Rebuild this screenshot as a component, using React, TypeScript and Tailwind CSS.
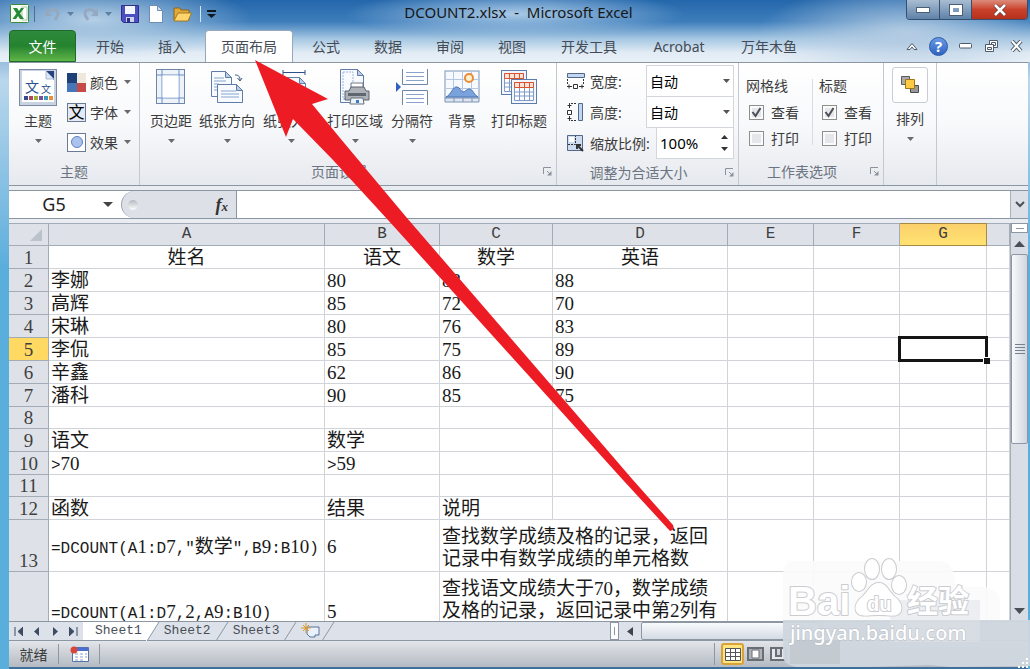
import { useState } from "react";
import type { ReactNode } from "react";

type Cell = { text: string; span?: number; lines?: string[] };
type Row = { id: number; cells: Cell[]; center?: boolean; height?: string };

const columns = ["A", "B", "C", "D", "E", "F", "G", ""];
const tabs = [
  { name: "开始", width: "w-[62px]" },
  { name: "插入", width: "w-[62px]" },
  { name: "页面布局", width: "w-[88px] mx-[2px]" },
  { name: "公式", width: "w-[62px]" },
  { name: "数据", width: "w-[62px]" },
  { name: "审阅", width: "w-[62px]" },
  { name: "视图", width: "w-[62px]" },
  { name: "开发工具", width: "w-[92px]" },
  { name: "Acrobat", width: "w-[88px]" },
  { name: "万年木鱼", width: "w-[92px]" },
];

const text = (...values: string[]): Cell[] => values.map((value) => ({ text: value }));

const rows: Row[] = [
  { id: 1, cells: text("姓名", "语文", "数学", "英语"), center: true },
  { id: 2, cells: text("李娜", "80", "83", "88") },
  { id: 3, cells: text("高辉", "85", "72", "70") },
  { id: 4, cells: text("宋琳", "80", "76", "83") },
  { id: 5, cells: text("李侃", "85", "75", "89") },
  { id: 6, cells: text("辛鑫", "62", "86", "90") },
  { id: 7, cells: text("潘科", "90", "85", "75") },
  { id: 8, cells: text("", "", "", ""), height: "h-[22px]" },
  { id: 9, cells: text("语文", "数学", "", "") },
  { id: 10, cells: text(">70", ">59", "", "") },
  { id: 11, cells: text("", "", "", ""), height: "h-[22px]" },
  { id: 12, cells: text("函数", "结果", "说明", "") },
  {
    id: 13,
    height: "h-[52px]",
    cells: [
      ...text('=DCOUNT(A1:D7,"数学",B9:B10)', "6"),
      { text: "", span: 2, lines: ["查找数学成绩及格的记录，返回", "记录中有数学成绩的单元格数"] },
    ],
  },
  {
    id: 14,
    height: "h-[78px]",
    cells: [
      ...text("=DCOUNT(A1:D7,2,A9:B10)", "5"),
      { text: "", span: 2, lines: ["查找语文成绩大于70，数学成绩", "及格的记录，返回记录中第2列有"] },
    ],
  },
];

// Digits, latin and chinese glyphs all sit on the same half-width grid
const CellText = ({ value }: { value: string }) => (
  <>
    {(value.match(/[0-9]+|[\x21-\x2f\x3a-\x7e]+|[^\x21-\x7e]+/g) || []).map((part, index) => {
      if (/^[0-9]/.test(part)) {
        return <span key={index} className="font-['Liberation_Serif',serif] text-[19px] leading-none">{part}</span>;
      }
      if (/^[\x21-\x7e]/.test(part)) {
        return <span key={index} className="font-['Liberation_Mono',monospace] text-[16px] leading-none">{part}</span>;
      }
      return <span key={index} className="text-[19px] leading-none">{part}</span>;
    })}
  </>
);

const Caret = ({ className = "" }: { className?: string }) => (
  <svg className={`shrink-0 ${className}`} width="7" height="4" viewBox="0 0 7 4">
    <path d="M0 0h7L3.500 4z" fill="currentColor" />
  </svg>
);

const Launcher = ({ label }: { label: string }) => (
  <button aria-label={label} className="flex w-[18px] shrink-0 items-center justify-center text-[#8a929c]">
    <svg width="9" height="9" viewBox="0 0 9 9" fill="none" stroke="currentColor">
      <path d="M.5 7V.5H8M4 4l3 3" />
      <path d="M8.500 4v4.500H4z" fill="currentColor" stroke="none" />
    </svg>
  </button>
);

const Group = ({ label, width, launcher, children }: { label: string; width: string; launcher?: boolean; children: ReactNode }) => (
  <section className={`flex shrink-0 flex-col border-r border-[#c3c9d0] ${width}`}>
    <div className="flex flex-1">{children}</div>
    <div className="flex h-[28px] items-center text-[14px] text-[#6b7480]">
      <span className="flex-1 text-center">{label}</span>
      {launcher && <Launcher label={label} />}
    </div>
  </section>
);

const BigButton = ({ label, width, caret = true, children }: { label: string; width: string; caret?: boolean; children: ReactNode }) => (
  <button className={`flex shrink-0 flex-col items-center whitespace-nowrap pt-[6px] ${width}`}>
    <span className="flex h-9 items-center">{children}</span>
    <span className="mt-1.5 leading-5">{label}</span>
    {caret && <Caret className="mt-2 text-[#6a6a6a]" />}
  </button>
);

const SmallButton = ({ label, children }: { label: string; children: ReactNode }) => (
  <button className="flex h-[30px] items-center">
    {children}
    <span className="ml-1 w-[34px] text-left">{label}</span>
    <Caret className="text-[#6a6a6a]" />
  </button>
);

const Page = ({ x, y, w, h }: { x: number; y: number; w: number; h: number }) => (
  <g transform={`translate(${x} ${y})`}>
    <path d={`M.5 .5h${w - 7}l6 6v${h - 7}H.5z`} fill="#f7faff" stroke="#5f7da8" />
    <path d={`M${w - 6.5} .5v6h6z`} fill="#b9cdea" stroke="#5f7da8" />
  </g>
);

const ThemeIcon = () => (
  <svg width="39" height="39" viewBox="0 0 39 39">
    <rect x=".5" y="1.500" width="37" height="36" fill="#c9d2e0" stroke="#7c8aa3" />
    <path d="M3 3h25l7 7v24H3z" fill="#fff" />
    <path d="M27 3h8v9z" fill="#28417f" />
    <path d="M27 3v8h8z" fill="#dde7f7" stroke="#8ba0c4" strokeWidth=".7" />
    <text x="6" y="24" fontSize="14" fill="#26508f">文</text>
    <text x="22" y="25" fontSize="10" fill="#26508f">文</text>
    <path d="M5 28h4v4H5z" fill="#34498e" />
    <path d="M10 28h4v4h-4z" fill="#b04a56" />
    <path d="M15 28h4v4h-4z" fill="#9caf3c" />
    <path d="M20 28h4v4h-4z" fill="#7551a0" />
    <path d="M25 28h4v4h-4z" fill="#3a9cb8" />
    <path d="M30 28h4v4h-4z" fill="#e7913c" />
  </svg>
);

const MarginsIcon = () => (
  <svg width="30" height="36" viewBox="0 0 30 36">
    <rect x=".5" y=".5" width="28" height="34" fill="#eef3fa" stroke="#6f86a8" />
    <path d="M6 1v33M23 1v33M1 6h27M1 29h27" stroke="#6b8fc4" fill="none" />
    <path d="M6.500 6.500h16v22h-16z" fill="#fff" />
  </svg>
);

const OrientationIcon = () => (
  <svg width="34" height="34" viewBox="0 0 34 34">
    <Page x={1} y={1} w={21} h={26} />
    <path d="M4 8h10M4 11h12M4 14h5M4 17h3M4 20h3" stroke="#89a5d0" />
    <Page x={7} y={14} w={26} h={19} />
    <path d="M11 21h15M11 24h18M11 27h18" stroke="#89a5d0" />
    <path d="M25 5c4 0 5 2 5 5m-2.500-2L30 11l2-3" fill="none" stroke="#3c557e" />
  </svg>
);

const SizeIcon = () => (
  <svg width="34" height="34" viewBox="0 0 34 34">
    <path d="M9 2.500h22M9 0v5M31 0v5M3.500 8v24M1 8h5M1 32h5" stroke="#2f4f8c" fill="none" />
    <Page x={9} y={7} w={23} h={26} />
  </svg>
);

const PrintAreaIcon = () => (
  <svg width="32" height="38" viewBox="0 0 32 38">
    <Page x={1} y={1} w={24} h={34} />
    <path d="M4 4h10v27H4z" fill="none" stroke="#9fb6d8" strokeDasharray="2 1" />
    <path d="M12 15h12v9H12z" fill="#fff" stroke="#707780" />
    <path d="M6 23h4l2-4h13l2 4h3v9H6z" fill="#adb2b8" stroke="#5c636d" />
    <path d="M9 25h18v3H9z" fill="#5f6670" />
    <path d="M12 30h12l1 6H11z" fill="#eef4fc" stroke="#68717d" />
    <path d="M17 32h3v3h-3z" fill="#3b7bc4" />
  </svg>
);

const BreaksIcon = () => (
  <svg width="34" height="36" viewBox="0 0 34 36">
    <path d="M7.500 0v15.500h25V0M7.500 36V21.500h25V36" fill="#fff" stroke="#6f86a8" />
    <path d="M11 3.500h18M11 7.500h18M11 11.500h18M11 25.500h18M11 29.500h18M11 33.500h18" stroke="#8aa3c6" />
    <path d="M1 13l5 5-5 5z" fill="#2e62c0" />
  </svg>
);

const BackgroundIcon = () => (
  <svg width="36" height="34" viewBox="0 0 36 34">
    <rect x="1" y="1" width="34" height="27" fill="#f6f9fe" stroke="#7b93b8" />
    <path d="M1 9.500h34M1 18.500h34M9.500 1v27M18.500 1v27M27.500 1v27" stroke="#b6c7e2" />
    <circle cx="25" cy="8" r="4" fill="#fff2d0" stroke="#ea8a35" strokeWidth="2" />
    <path d="M2 27c5-2 7-11 11-10 3 0 4 5 6 5s4-3 6-3c4 0 5 6 9 8z" fill="#7aa3de" stroke="#4a73b5" />
    <path d="M1 28h34v4H1z" fill="#dfe5ee" stroke="#7b93b8" />
    <path d="M10 28v4M19 28v4M28 28v4" stroke="#7b93b8" />
  </svg>
);

const TitlesIcon = () => (
  <svg width="38" height="36" viewBox="0 0 38 36">
    {[[1, 1], [11, 10]].map(([x, y]) => (
      <g key={x} transform={`translate(${x} ${y})`}>
        <rect x=".5" y=".5" width="25" height="24" fill="#f3f7fd" stroke="#5c7cab" />
        <path d="M3.500 3.500h19v18h-19zM3 13h20M3 17h20M8.500 3v18M13.500 3v18M18.500 3v18M3 8.500h20" fill="#fff" stroke="#7e9bc8" />
        <path d="M3.500 3.500h19v5h-19zM8.500 3v5M13.500 3v5M18.500 3v5" fill="#fbe3da" stroke="#d9532f" />
      </g>
    ))}
  </svg>
);

const ArrangeIcon = () => (
  <svg width="20" height="20" viewBox="0 0 20 20">
    <path d="M1.500 1.500h8v8h-8z" fill="#aaa" stroke="#5c5c5c" />
    <path d="M10.500 10.500h8v7h-8z" fill="#999" stroke="#4d4d4d" />
    <path d="M5.500 4.500h9v9h-9z" fill="#ffcb45" stroke="#a37519" />
  </svg>
);

const WidthIcon = () => (
  <svg width="19" height="18" viewBox="0 0 19 18" fill="none" stroke="#333">
    <path d="M1.500 1.500h17v4h-17z" fill="#c3d6ef" stroke="#51688b" />
    <path d="M1.500 7v5M17.500 7v5" strokeDasharray="2 1" />
    <path d="M1 14.500h5M13 14.500h5M3 12.500v4M16 12.500v4" />
    <path d="M7.500 12.500h4v4h-4z" fill="#fff" />
  </svg>
);

const HeightIcon = () => (
  <svg width="19" height="18" viewBox="0 0 19 18" fill="none" stroke="#333">
    <path d="M12.500 .5h4v17h-4z" fill="#c3d6ef" stroke="#51688b" />
    <path d="M5 .5h6M5 17.500h6" strokeDasharray="2 1" />
    <path d="M3.500 0v5M3.500 13v5M1.500 2.500h4M1.500 15.500h4" />
    <path d="M1.500 7.500h4v4h-4z" fill="#fff" />
  </svg>
);

const ScaleIcon = () => (
  <svg width="19" height="18" viewBox="0 0 19 18" fill="none" stroke="#333">
    <path d="M1.500 1.500h15v15h-15z" fill="#cfdcf0" stroke="#51688b" />
    <path d="M2 10.500h7.500V2" strokeDasharray="2 1" />
    <path d="M3 3h5v5H3z" fill="#fff" stroke="none" />
    <path d="M17 17l-6-6m0 4v-4h4" strokeWidth="2" />
  </svg>
);

const CheckOption = ({ label, group, checked }: { label: string; group: string; checked?: boolean }) => (
  <label className="relative flex h-[26px] items-center gap-[7px] pl-[3px]">
    <input
      type="checkbox"
      aria-label={group + label}
      defaultChecked={checked}
      className="peer size-[15px] appearance-none border border-[#8e8f8f] bg-[#e4e6ea] shadow-[inset_0_0_0_2px_#fafafa]"
    />
    <svg className="absolute left-[5px] hidden peer-checked:block" width="11" height="11" viewBox="0 0 11 11" fill="none" stroke="#4a4f58" strokeWidth="2">
      <path d="M1.500 5l3 4L9.500 1" />
    </svg>
    {label}
  </label>
);

const SizeRow = ({ label, icon }: { label: string; icon: ReactNode }) => (
  <label className="-mb-px flex h-8 items-center">
    {icon}
    <span className="ml-[5px] flex-1">{label}</span>
    <span className="relative flex h-full items-center">
      <select className="h-full w-[88px] appearance-none border border-[#d3d7dc] bg-white pl-[3px] text-black">
        <option>自动</option>
      </select>
      <Caret className="absolute right-1 text-[#555]" />
    </span>
  </label>
);

const QuickAccess = () => (
  <div className="flex items-center pl-px pt-1">
    <svg width="19" height="19" viewBox="0 0 19 19">
      <rect x=".5" y=".5" width="18" height="18" rx="1" fill="#f5faf3" stroke="#3b8a3e" />
      <path d="M12 3h5v13h-5z" fill="#fff" stroke="#a7c9a6" />
      <path d="M3 4h4l2 3 2-3h3l-4 5.500L14 15h-4l-2-3-2 3H2.500l4-5.500z" fill="#238a35" />
    </svg>
    <span className="ml-[5px] h-4 w-px bg-[#4c6e94]" />
    <button aria-label="撤消" className="ml-[9px] text-[#94a9c0]">
      <svg width="17" height="16" viewBox="0 0 17 16" fill="none" stroke="currentColor" strokeWidth="3">
        <path d="M4 6c3-4 11-3 10 2 0 2-2 4-3 6" />
        <path d="M1 2v8h7z" fill="currentColor" stroke="none" />
      </svg>
    </button>
    <Caret className="ml-1.5 text-[#5d7fa5]" />
    <button aria-label="恢复" className="ml-2 text-[#94a9c0]">
      <svg width="17" height="16" viewBox="0 0 17 16" fill="none" stroke="currentColor" strokeWidth="3">
        <path d="M13 6C10 2 2 3 3 8c0 2 2 4 3 6" />
        <path d="M16 2v8H9z" fill="currentColor" stroke="none" />
      </svg>
    </button>
    <Caret className="ml-1.5 text-[#5d7fa5]" />
    <button aria-label="保存" className="ml-[9px]">
      <svg width="18" height="18" viewBox="0 0 18 18">
        <path d="M.5 .5h17v17H2.500l-2-2z" fill="#4b4fc0" stroke="#2b2f86" />
        <path d="M4 1h10v8H4z" fill="#f2f6ff" />
        <path d="M5 12h8v5H5z" fill="#cdd3ea" />
        <path d="M6 13h3v4H6z" fill="#2b2f86" />
      </svg>
    </button>
    <button aria-label="新建" className="ml-[10px]">
      <svg width="14" height="18" viewBox="0 0 14 18">
        <path d="M.5 .5h8l5 5v12H.5z" fill="#fff" stroke="#6d8db5" />
        <path d="M8.500 .5v5h5z" fill="#cfdff2" stroke="#6d8db5" />
      </svg>
    </button>
    <button aria-label="打开" className="ml-[10px]">
      <svg width="19" height="16" viewBox="0 0 19 16">
        <path d="M1 14V2h6l1 2h8v10z" fill="#e0a93a" stroke="#8d6516" />
        <path d="M1 15L5 7h13.500L15 15z" fill="#ffd66e" stroke="#a5781f" />
      </svg>
    </button>
    <span className="ml-2 h-4 w-px bg-[#d5e4f2]" />
    <button aria-label="自定义快速访问工具栏" className="ml-1.5 text-[#101820]">
      <svg width="9" height="8" viewBox="0 0 9 8">
        <path d="M0 0h9v2H0zM0 4h9L4.500 8z" fill="currentColor" />
      </svg>
    </button>
  </div>
);

const WindowButtons = () => (
  <div className="flex h-5 overflow-hidden rounded-b border border-t-0 border-[#35506f] text-white">
    <button aria-label="最小化" className="flex w-[33px] items-center justify-center border-r border-[#35506f] bg-linear-to-b from-[#a9bdd2] to-[#5f82a8]">
      <span className="h-1 w-3 bg-white outline outline-[#4b5e75]" />
    </button>
    <button aria-label="最大化" className="flex w-8 items-center justify-center border-r border-[#35506f] bg-linear-to-b from-[#a9bdd2] to-[#5f82a8]">
      <span className="h-2.5 w-3 border-[3px] border-white outline outline-[#4b5e75]" />
    </button>
    <button aria-label="关闭" className="flex w-[55px] items-center justify-center bg-linear-to-b from-[#dc8a7a] via-[#c9412a] to-[#b5301c]">
      <svg width="14" height="12" viewBox="0 0 14 12">
        <path d="M2 1l10 10M12 1L2 11" stroke="#5c3a3a" strokeWidth="4" />
        <path d="M2 1l10 10M12 1L2 11" stroke="#fff" strokeWidth="2.600" />
      </svg>
    </button>
  </div>
);

const Ribbon = () => (
  <div className="flex h-[124px] shrink-0 border-y border-[#8c96a2] bg-linear-to-b from-white via-[#f8f9fb] to-[#e6e9ee] text-[14px] text-[#3b3b3b]">
    <Group label="主题" width="w-[131px]">
      <BigButton label="主题" width="w-[58px]"><ThemeIcon /></BigButton>
      <div className="flex flex-col pt-1">
        <SmallButton label="颜色">
          <svg width="19" height="19" viewBox="0 0 19 19">
            <path d="M0 0h10v10H0z" fill="#1f3f77" />
            <path d="M10 0h9v10h-9z" fill="#eee9dc" />
            <path d="M0 10h10v9H0z" fill="#4676b8" />
            <path d="M10 10h9v9h-9z" fill="#c54a48" />
          </svg>
        </SmallButton>
        <SmallButton label="字体">
          <span className="flex size-[19px] items-center justify-center border border-[#6b7b93] bg-[#e4ebf6] text-[16px] leading-none text-black">文</span>
        </SmallButton>
        <SmallButton label="效果">
          <span className="flex size-[19px] items-center justify-center border border-[#6b7b93] bg-white">
            <span className="size-3 rounded-full border border-[#5f82c4] bg-[#a9c3ee]" />
          </span>
        </SmallButton>
      </div>
    </Group>
    <Group label="页面设置" width="w-[417px] [&>div:first-child]:pl-[7px]" launcher>
      <BigButton label="页边距" width="w-12"><MarginsIcon /></BigButton>
      <BigButton label="纸张方向" width="w-16"><OrientationIcon /></BigButton>
      <BigButton label="纸张大小" width="w-16"><SizeIcon /></BigButton>
      <BigButton label="打印区域" width="w-16"><PrintAreaIcon /></BigButton>
      <BigButton label="分隔符" width="w-[50px]"><BreaksIcon /></BigButton>
      <BigButton label="背景" width="w-[50px]" caret={false}><BackgroundIcon /></BigButton>
      <BigButton label="打印标题" width="w-16" caret={false}><TitlesIcon /></BigButton>
    </Group>
    <Group label="调整为合适大小" width="w-[182px]" launcher>
      <div className="flex flex-1 flex-col pl-[9px] pr-1 pt-[2px]">
        <SizeRow label="宽度:" icon={<WidthIcon />} />
        <SizeRow label="高度:" icon={<HeightIcon />} />
        <label className="flex h-8 items-center">
          <ScaleIcon />
          <span className="ml-[5px] flex-1">缩放比例:</span>
          <span className="relative flex h-full items-center">
            <input defaultValue="100%" className="h-full w-[78px] border border-[#d3d7dc] bg-white pl-[3px] text-[15px] text-black" />
            <span className="absolute right-1.5 flex flex-col gap-2 text-[#333]">
              <Caret className="rotate-180" />
              <Caret />
            </span>
          </span>
        </label>
      </div>
    </Group>
    <Group label="工作表选项" width="w-[145px]" launcher>
      <fieldset className="flex w-[73px] flex-col pl-[7px] pt-[10px]">
        <legend className="float-left h-[26px] leading-[26px]">网格线</legend>
        <CheckOption label="查看" group="网格线" checked />
        <CheckOption label="打印" group="网格线" />
      </fieldset>
      <span className="mt-4 h-[66px] w-px bg-[#d8dce2]" />
      <fieldset className="flex flex-1 flex-col pl-1.5 pt-[10px]">
        <legend className="float-left h-[26px] leading-[26px]">标题</legend>
        <CheckOption label="查看" group="标题" checked />
        <CheckOption label="打印" group="标题" />
      </fieldset>
    </Group>
    <section className="flex w-[53px] shrink-0 justify-center border-r border-[#c3c9d0] pt-1">
      <button className="flex flex-col items-center">
        <span className="flex size-9 items-center justify-center rounded-[3px] border border-[#c9ced6] bg-white"><ArrangeIcon /></span>
        <span className="mt-1.5 leading-5">排列</span>
        <Caret className="mt-2 text-[#6a6a6a]" />
      </button>
    </section>
  </div>
);

const FormulaBar = () => (
  <div className="flex h-[37px] shrink-0 flex-col bg-[#e9ecf1] pb-[5px] pt-1">
    <div className="flex flex-1 border-y border-[#8c96a2] bg-[#dde1e7]">
      <div className="flex w-[112px] items-center bg-white pr-1">
        <input aria-label="名称框" defaultValue="G5" className="w-[90px] text-center text-[18px] text-[#222]" />
        <svg className="ml-1" width="10" height="5" viewBox="0 0 10 5"><path d="M0 0h10L5 5z" fill="#444" /></svg>
      </div>
      <div className="flex w-[115px] items-center justify-between bg-white">
        <div className="flex h-full flex-1 items-center justify-between rounded-l-full border-l border-[#9aa3ae] bg-[#dde1e7] pl-1.5 pr-2">
          <span className="size-2.5 rounded-full bg-linear-to-b from-[#b5bac1] to-white" />
          <button aria-label="插入函数" className="font-['Liberation_Serif',serif] text-[18px] font-bold italic leading-none text-[#333]">
            f<span className="text-[13px]">x</span>
          </button>
        </div>
      </div>
      <input aria-label="编辑栏" className="min-w-0 flex-1 border-l border-[#8c96a2] bg-white" />
      <button aria-label="展开编辑栏" className="flex w-[18px] items-center justify-center border-l border-[#a9b1bb]">
        <svg width="10" height="7" viewBox="0 0 10 7" fill="none" stroke="#4a4f55" strokeWidth="2"><path d="M1 1l4 4 4-4" /></svg>
      </button>
    </div>
  </div>
);

const Sheet = () => (
  <div className="flex min-h-0 flex-1">
    <div className="min-w-0 flex-1 overflow-hidden bg-white">
      <table className="w-full table-fixed border-separate border-spacing-0 text-[#1a1a1a]">
        <colgroup>
          <col className="w-10" />
          <col className="w-[276px]" />
          <col className="w-[115px]" />
          <col className="w-[113px]" />
          <col className="w-[175px]" />
          <col className="w-[86px]" />
          <col className="w-[86px]" />
          <col className="w-[87px]" />
          <col />
        </colgroup>
        <thead>
          <tr className="h-[23px] font-['Liberation_Mono',monospace] text-[16px] leading-[21px] text-[#3f3f3f]">
            <th className="border-b border-r border-t border-[#a3abb6] bg-[#dee2e8] p-0">
              <svg className="ml-auto mr-1.5" width="12" height="12" viewBox="0 0 12 12"><path d="M12 0v12H0z" fill="#bcc2ca" /></svg>
            </th>
            {columns.map((name, index) => (
              <th
                key={index}
                className={`border-b border-r border-t p-0 font-normal ${name === "G" ? "border-[#a98a45] bg-linear-to-b from-[#fbd06a] to-[#ffe372]" : "border-[#a3abb6] bg-[#dee2e8]"}`}
              >
                {name}
              </th>
            ))}
          </tr>
        </thead>
        <tbody>
          {rows.map((row) => (
            <tr key={row.id} className={row.height || "h-[23px]"}>
              <th className={`border-b border-r border-[#a3abb6] p-0 align-bottom text-[19px] font-normal leading-[21px] text-[#3f3f3f] ${row.id === 5 ? "bg-[#ffd961]" : "bg-[#dee2e8]"}`}>
                {row.id < 14 && <CellText value={String(row.id)} />}
              </th>
              {row.cells.map((cell, index) => (
                <td
                  key={index}
                  colSpan={cell.span}
                  className={`whitespace-nowrap border-b border-r border-[#d0d3d8] py-0 pr-0 text-[19px] leading-[22px] ${row.center ? "text-center" : "pl-[2px]"} ${cell.lines ? "pt-[5px] align-top" : "align-middle"}`}
                >
                  {cell.lines ? cell.lines.map((line) => <div key={line}><CellText value={line} /></div>) : <CellText value={cell.text} />}
                </td>
              ))}
              {["E", "F", "G", "H"].map((name) => (
                <td key={name} className={`border-b border-r border-[#d0d3d8] p-0 ${name === "G" && row.id === 5 ? "relative z-10" : ""}`}>
                  {name === "G" && row.id === 5 && (
                    <span className="absolute -inset-[2px] border-[3px] border-[#151515]">
                      <span className="absolute -bottom-[5px] -right-[5px] size-[7px] border-l border-t border-white bg-[#151515]" />
                    </span>
                  )}
                </td>
              ))}
            </tr>
          ))}
        </tbody>
      </table>
    </div>
    <div className="flex w-[18px] shrink-0 flex-col items-center border-l border-[#a3abb6] bg-[#d9dee6]">
      <div className="flex h-2.5 w-full items-center justify-center border border-[#8d97a3] bg-white"><span className="h-px w-2 bg-[#8d97a3]" /></div>
      <button aria-label="向上滚动" className="flex h-[21px] items-center">
        <svg width="11" height="6" viewBox="0 0 11 6"><path d="M0 6h11L5.500 0z" fill="#4a4f55" /></svg>
      </button>
      <div className="flex h-[190px] w-full flex-col items-center justify-center gap-[2px] rounded-[2px] border border-[#8d97a3] bg-linear-to-r from-[#f8fafc] to-[#cfd6df]">
        <span className="h-px w-2.5 bg-[#77818e]" />
        <span className="h-px w-2.5 bg-[#77818e]" />
        <span className="h-px w-2.5 bg-[#77818e]" />
        <span className="h-px w-2.5 bg-[#77818e]" />
      </div>
      <button aria-label="向下滚动" className="mt-auto flex h-5 items-center">
        <svg width="11" height="6" viewBox="0 0 11 6"><path d="M0 0h11L5.500 6z" fill="#4a4f55" /></svg>
      </button>
    </div>
  </div>
);

const Slash = ({ filled }: { filled?: boolean }) => (
  <svg className="shrink-0" width="14" height="19" viewBox="0 0 14 19">
    {filled && <path d="M0 0h13L1 19H0z" fill="#fff" />}
    <path d="M13 0L1 19" stroke="#8d97a3" />
  </svg>
);

const SheetTabs = () => {
  const [sheet, setSheet] = useState("Sheet1");
  return (
    <div className="flex h-5 shrink-0 items-stretch border-y border-[#8d97a3] bg-[#dde2ea]">
      <div className="flex w-[74px] items-center justify-around text-[#3d4c63]">
        {["M1 0v9M9 0v9L4 4.500z", "M7 0v9L2 4.500z", "M2 0v9l5-4.500z", "M8 0v9M0 0v9l5-4.500z"].map((d, index) => (
          <button key={d} aria-label={["第一张", "上一张", "下一张", "最后一张"][index]}>
            <svg width="9" height="9" viewBox="0 0 9 9"><path d={d} fill="currentColor" stroke={index % 3 ? "none" : "currentColor"} strokeWidth="1" /></svg>
          </button>
        ))}
      </div>
      {["Sheet1", "Sheet2", "Sheet3"].map((name) => (
        <div key={name} className="flex">
          <button
            onClick={() => setSheet(name)}
            className={`font-['Liberation_Mono',monospace] text-[13px] leading-[18px] text-[#4a4f57] ${name === sheet ? "bg-white pl-3 pr-1" : "pl-1 pr-1"}`}
          >
            {name}
          </button>
          <Slash filled={name === sheet} />
        </div>
      ))}
      <button aria-label="插入工作表" className="pl-1">
        <svg width="20" height="16" viewBox="0 0 20 16">
          <path d="M6 4h12v8h-4v2H9l-3-3z" fill="#eaf1fb" stroke="#58739c" />
          <path d="M5 0v10M0 5h10M2 2l6 6M8 2L2 8" stroke="#d99a2b" />
        </svg>
      </button>
      <Slash />
      <div className="ml-auto flex w-[418px] items-stretch">
        <span className="flex w-[9px] items-center justify-center border border-[#8d97a3] bg-white"><span className="h-2 w-px bg-[#8d97a3]" /></span>
        <button aria-label="向左滚动" className="flex w-[22px] items-center justify-center">
          <svg width="6" height="9" viewBox="0 0 6 9"><path d="M6 0v9L0 4.500z" fill="#3f454d" /></svg>
        </button>
        <div className="w-[180px] rounded-[2px] border border-[#8d97a3] bg-linear-to-b from-[#f8fafc] to-[#d5dbe4]" />
      </div>
    </div>
  );
};

const StatusBar = () => (
  <div className="flex h-[28px] shrink-0 items-center border-b-2 border-[#3f6f9f] bg-linear-to-b from-[#e2e5e9] to-[#b5bbc3] text-[14px] text-[#3b3b3b]">
    <span className="w-[49px] text-center">就绪</span>
    <span className="h-5 w-px bg-[#8f979f]" />
    <button aria-label="录制宏" className="flex w-10 justify-center">
      <svg width="19" height="16" viewBox="0 0 19 16">
        <path d="M2.500 1.500h16v14h-16z" fill="#fff" stroke="#5472b0" />
        <path d="M3 2h15v3H3z" fill="#4a6fd0" />
        <path d="M5 8h3M10 8h3M15 8h2M5 11h3M10 11h3M15 11h2M5 14h3M10 14h3" stroke="#88a0d0" />
        <circle cx="4" cy="4" r="3.500" fill="#d8463a" />
      </svg>
    </button>
    <span className="h-5 w-px bg-[#8f979f]" />
    <div className="ml-auto flex w-[314px] items-center gap-[3px] border-l border-[#8f979f] pl-1.5">
      <button aria-label="普通" className="flex h-[22px] w-[23px] items-center justify-center rounded-[3px] border-2 border-[#d9a13a] bg-[#ffe680]">
        <svg width="16" height="13" viewBox="0 0 16 13"><path d="M.5 .5h15v12H.5zM1 4.500h14M1 8.500h14M5.500 1v11M10.500 1v11" fill="#fff" stroke="#555" /></svg>
      </button>
      <button aria-label="页面布局视图">
        <svg width="17" height="14" viewBox="0 0 17 14"><path d="M1 1h15v12H1z" fill="#aeb3b9" stroke="#6a6e74" strokeWidth="2" /><path d="M5 3h7v8H5z" fill="#fff" stroke="#6a6e74" /></svg>
      </button>
      <button aria-label="分页预览" className="ml-[3px]">
        <svg width="17" height="14" viewBox="0 0 17 14"><path d="M1 1h15v12H1zM6 1v8h5V1M11 9H6" fill="#e7eaed" stroke="#6a6e74" strokeWidth="2" /></svg>
      </button>
    </div>
  </div>
);

const Watermark = () => (
  <svg className="pointer-events-none absolute bottom-0 right-0" width="250" height="112" viewBox="780 557 250 112">
    <path d="M790 561h150q15 0 15 26h30q15 4 15 15v18H783V575q0-10 7-14z" fill="#fbfbfc" fillOpacity=".92" />
    <path d="M783 620h247v46l-80 1-20-2-60 2H797q-14-2-14-12z" fill="#cfd6de" fillOpacity=".95" />
    <path d="M890 600h90v42H890z" fill="#dfe2e8" fillOpacity=".5" />
    <path d="M790 640h50v24h-50z" fill="#bfc5cb" fillOpacity=".7" />
    <g fill="#fff" stroke="#cbccd0" strokeWidth="2" strokeLinejoin="round" paintOrder="stroke">
      <ellipse cx="859" cy="582" rx="7" ry="9" />
      <ellipse cx="872" cy="569" rx="7" ry="10" />
      <ellipse cx="889" cy="569" rx="7" ry="10" />
      <ellipse cx="899" cy="585" rx="7" ry="9" />
      <path d="M879 583c-8 0-10 7-16 13-5 4-9 9-7 15 3 7 12 4 23 4s19 3 22-4c2-6-2-11-7-15-6-6-8-13-15-13z" />
      <text x="788" y="615" fontFamily="Liberation Sans, sans-serif" fontSize="40" fontWeight="700">Bai</text>
      <text x="867" y="611" fontFamily="Liberation Sans, sans-serif" fontSize="20" fontWeight="700">du</text>
      <text x="907" y="612" fontSize="31" fontWeight="700">经验</text>
    </g>
    <text x="790" y="640" fontFamily="Noto Sans, sans-serif" fontSize="20" fontWeight="500" fill="#fff" stroke="#b7bcc4" strokeWidth="1" paintOrder="stroke">jingyan.baidu.com</text>
    <path d="M1026 658h2v2h-2zM1022 662h2v2h-2zM1026 662h2v2h-2zM1018 666h2v2h-2zM1022 666h2v2h-2zM1026 666h2v2h-2z" fill="#fff" />
  </svg>
);

const App = () => {
  const [active, setActive] = useState("页面布局");

  return (
    <div className="relative flex h-screen flex-col overflow-hidden bg-linear-to-b from-[#2d6ca8] from-0% via-[#b9d7ec] via-[12%] to-[#5aaedc] to-[40%] pl-[9px] pr-[2px] font-['Noto_Sans','Noto_Sans_CJK_SC',sans-serif]">
      <div className="absolute inset-x-0 top-0 h-[62px] bg-[linear-gradient(to_bottom,#2467ab_0,#3d7dbb_35%,#a4c6e2_62%,#e2ecf5_85%,#e9f0f7_100%)]" />
      <div className="absolute inset-x-0 top-0 h-[62px] bg-[radial-gradient(ellipse_160px_40px_at_9%_20px,#b5cfe5_0,transparent_100%),radial-gradient(ellipse_170px_24px_at_50%_14px,#a9c9e6_0,transparent_100%),radial-gradient(ellipse_150px_50px_at_88%_34px,#b4cce3_0,transparent_100%)]" />

      <header className="relative flex h-[30px] shrink-0 items-start justify-between">
        <QuickAccess />
        <h1 className="absolute inset-x-0 top-0 text-center text-[15px] leading-6 whitespace-pre text-[#161616]">DCOUNT2.xlsx  -  Microsoft Excel</h1>
        <WindowButtons />
      </header>

      <nav className="relative flex h-8 shrink-0 items-stretch text-[14px] text-[#444b55]">
        <button className="w-[67px] rounded-t-[4px] border border-[#1c6b2c] bg-linear-to-b from-[#2f8a3c] via-[#24832f] to-[#5fb548] text-white">文件</button>
        <div className="ml-[3px] flex">
          {tabs.map((tab) => (
            <button
              key={tab.name}
              onClick={() => setActive(tab.name)}
              className={`${tab.width} ${tab.name === active ? "rounded-t-[4px] border border-b-0 border-[#98a8ba] bg-white" : ""}`}
            >
              {tab.name}
            </button>
          ))}
        </div>
        <div className="ml-auto flex items-center gap-[11px] pr-[5px] text-[#4f5b6a]">
          <button aria-label="功能区最小化">
            <svg width="12" height="9" viewBox="0 0 12 9" fill="#fff" stroke="currentColor"><path d="M1 7.500L6 1.500l5 6H8L6 5 4 7.500z" /></svg>
          </button>
          <button aria-label="帮助" className="size-[19px] rounded-full border border-[#2858a8] bg-linear-to-b from-[#6c9be4] to-[#2d62c0] text-[15px] leading-none font-bold text-white">?</button>
          <button aria-label="最小化窗口">
            <svg width="14" height="6" viewBox="0 0 14 6"><rect x=".5" y=".5" width="12" height="4.500" rx="1" fill="#fff" stroke="currentColor" /></svg>
          </button>
          <button aria-label="还原窗口">
            <svg width="15" height="14" viewBox="0 0 15 14" fill="#fff" stroke="currentColor">
              <path d="M5.500 1.500h8v7h-8z" /><path d="M7.500 3.500h4v3h-4z" />
              <path d="M1.500 5.500h8v7h-8z" /><path d="M3.500 8.500h4v2h-4z" />
            </svg>
          </button>
          <button aria-label="关闭窗口">
            <svg width="13" height="12" viewBox="0 0 13 12" fill="none">
              <path d="M2 1l9 10M11 1L2 11" stroke="currentColor" strokeWidth="4" />
              <path d="M2 1l9 10M11 1L2 11" stroke="#fff" strokeWidth="2" />
            </svg>
          </button>
        </div>
      </nav>

      <main className="relative flex min-h-0 flex-1 flex-col">
        <Ribbon />
        <FormulaBar />
        <Sheet />
        <SheetTabs />
        <StatusBar />
      </main>

      <Watermark />

      {/* Callout arrow pointing at the page layout tab */}
      <svg className="pointer-events-none absolute left-[250px] top-[55px] z-20" width="430" height="480" viewBox="250 55 430 480">
        <path d="M255 60L328 99 312 104 340 138 407 218 571 408 633 480 673 525Q675 530 670 531L623 480 558 408 388 220 333 160 293 119 286 137z" fill="#ed1c24" />
      </svg>
    </div>
  );
};

export default App;
